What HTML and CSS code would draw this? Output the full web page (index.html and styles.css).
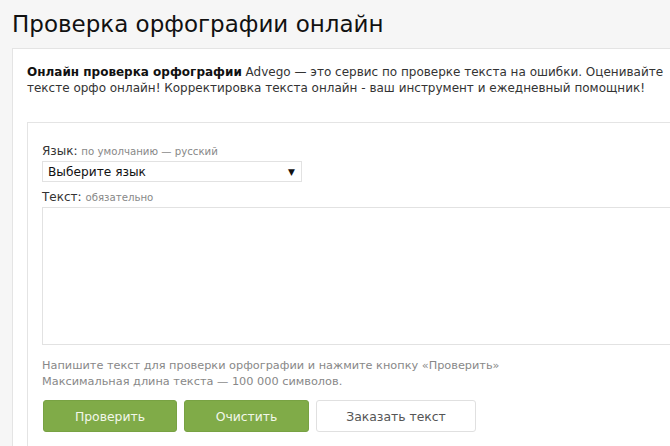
FILE: index.html
```html
<!DOCTYPE html>
<html lang="ru">
<head>
<meta charset="utf-8">
<link rel="stylesheet" href="styles.css">
</head>
<body>
<h1 class="title">Проверка орфографии онлайн</h1>
<div class="panel">
  <p class="intro"><b>Онлайн проверка орфографии</b> Advego — это сервис по проверке текста на ошибки. Оценивайте тексте орфо онлайн! Корректировка текста онлайн - ваш инструмент и ежедневный помощник!</p>
  <div class="form">
    <div class="label">Язык: <span class="hint">по умолчанию — русский</span></div>
    <div class="select"><span>Выберите язык</span><span class="arrow">▼</span></div>
    <div class="label">Текст: <span class="hint">обязательно</span></div>
    <div class="textarea"></div>
    <p class="note">Напишите текст для проверки орфографии и нажмите кнопку «Проверить»<br>Максимальная длина текста — 100 000 символов.</p>
    <div class="buttons">
      <button class="btn green b1">Проверить</button>
      <button class="btn green b2">Очистить</button>
      <button class="btn white b3">Заказать текст</button>
    </div>
  </div>
</div>
</body>
</html>
```
FILE: styles.css
```css
html, body {
  margin: 0;
  padding: 0;
  background: #f6f6f6;
  overflow: hidden;
  width: 670px;
  height: 446px;
}
body {
  font-family: "DejaVu Sans", Verdana, sans-serif;
  color: #222;
}
.title {
  margin: 0;
  padding: 10px 0 0 12px;
  height: 48px;
  box-sizing: border-box;
  font-weight: normal;
  font-size: 23px;
  line-height: 28px;
  color: #111;
}
.panel {
  margin-left: 12px;
  width: 700px;
  height: 400px;
  background: #fff;
  border: 1px solid #e4e4e4;
  padding: 15px 0 0 14px;
  box-sizing: border-box;
}
.intro {
  margin: 0;
  font-size: 12px;
  line-height: 16px;
  color: #333;
  width: 660px;
}
.intro b { color: #111; }
.form {
  margin-top: 26px;
  width: 700px;
  height: 400px;
  border: 1px solid #e4e4e4;
  padding: 20px 0 0 14px;
  box-sizing: border-box;
}
.label {
  font-size: 12px;
  line-height: 16px;
  color: #333;
}
.hint {
  font-size: 10.2px;
  color: #888;
}
.select {
  margin-top: 1px;
  width: 260px;
  height: 21px;
  border: 1px solid #e2e2e2;
  box-sizing: border-box;
  display: flex;
  justify-content: space-between;
  align-items: center;
  padding: 0 6px 0 5px;
  font-size: 12.2px;
  color: #111;
  margin-bottom: 7px;
}
.arrow { font-size: 9px; }
.textarea {
  margin-top: 1px;
  width: 700px;
  height: 138px;
  border: 1px solid #e2e2e2;
  box-sizing: border-box;
}
.note {
  margin: 13px 0 0 0;
  font-size: 11.3px;
  line-height: 16px;
  color: #888;
}
.buttons {
  margin-top: 10px;
  display: flex;
  gap: 7px;
}
.btn {
  height: 32px;
  border-radius: 3px;
  font-family: "DejaVu Sans", Verdana, sans-serif;
  font-size: 12.4px;
  padding: 0;
}
.green {
  background: #80ab48;
  border: 1px solid #78a243;
  color: #f2f7ea;
}
.white {
  background: #fff;
  border: 1px solid #e0e0e0;
  color: #555;
}
.b1 { width: 134px; margin-left: 1px; }
.b2 { width: 125px; }
.b3 { width: 160px; }
```
